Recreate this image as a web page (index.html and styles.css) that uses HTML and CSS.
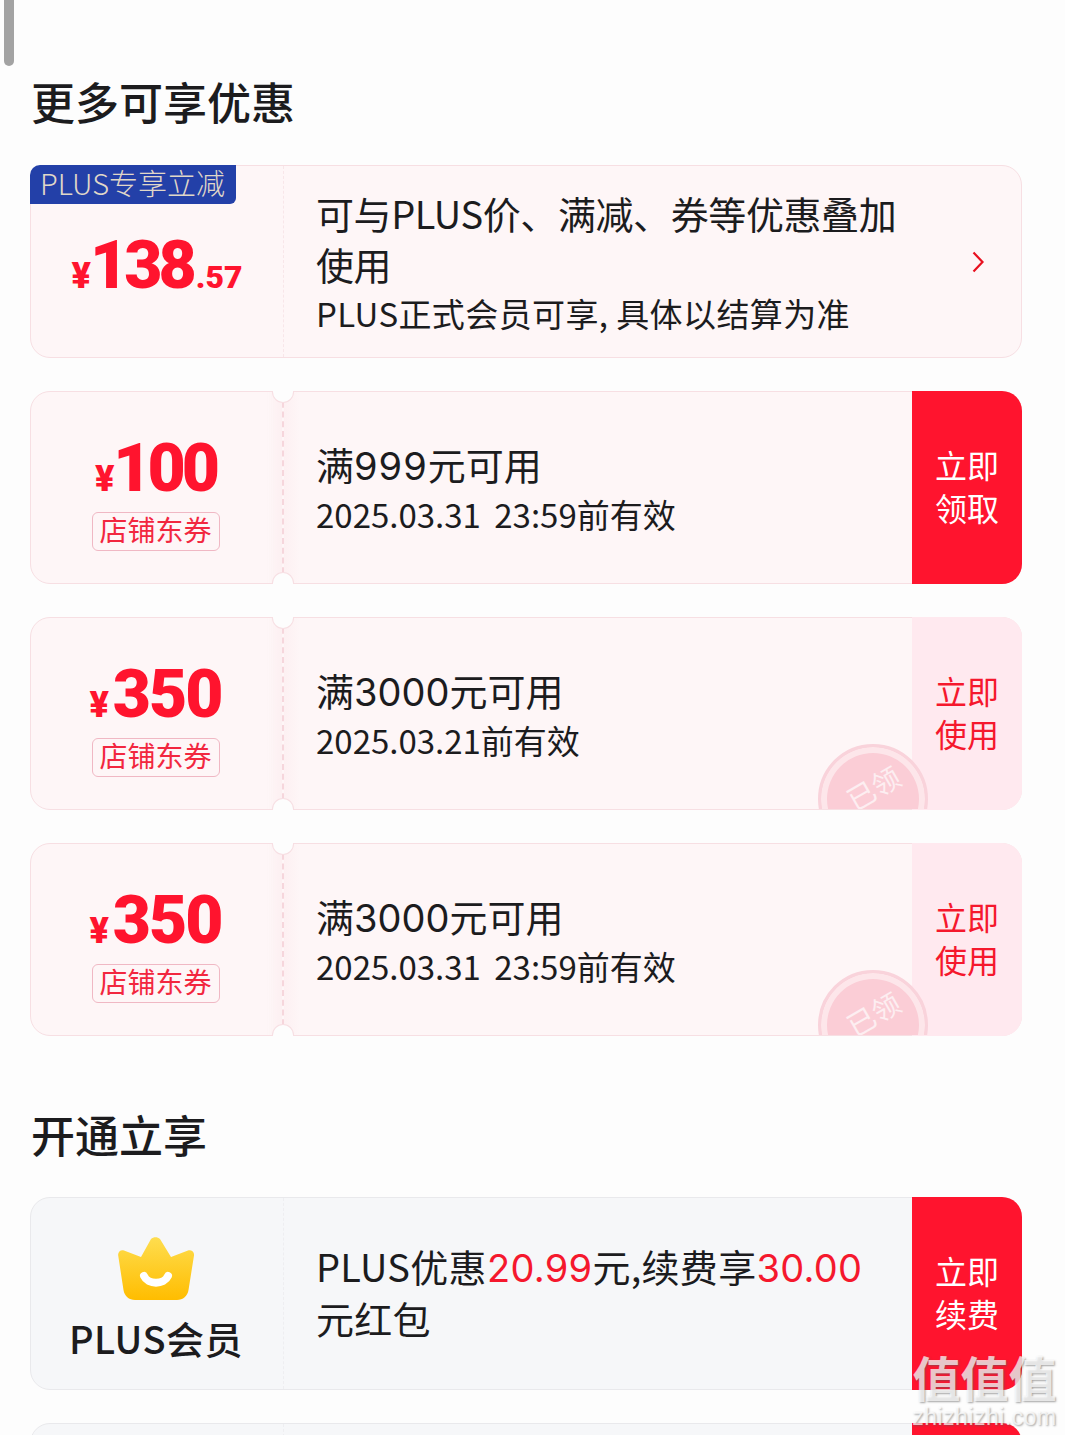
FILE: index.html
```html
<!DOCTYPE html>
<html lang="zh-CN">
<head>
  <meta charset="UTF-8" />
  <meta name="viewport" content="width=device-width, initial-scale=1.0"/>
  <title>更多可享优惠</title>
  <link rel="stylesheet" href="styles.css">
</head>
<body>
<div class="scroll-thumb"></div>

<main class="page">
  <h2>更多可享优惠</h2>

  <div class="card plus-card">
    <div class="plus-tag">PLUS专享立减</div>
    <div class="left">
      <div class="price"><span class="yen">¥</span><span class="num tight">138</span><span class="cents">.57</span></div>
    </div>
    <div class="info info-wide">
      <div class="title">可与PLUS价、满减、券等优惠叠加使用</div>
      <div class="sub">PLUS正式会员可享, 具体以结算为准</div>
    </div>
    <div class="arrow">
      <svg width="14" height="22" viewBox="0 0 14 22"><path d="M2.5 1.5 L11.5 11 L2.5 20.5" fill="none" stroke="#e8101f" stroke-width="2.2"/></svg>
    </div>
  </div>

  <div class="card coupon">
    <i class="notch notch-top"></i><i class="notch notch-bottom"></i>
    <div class="left">
      <div class="price"><span class="yen">¥</span><span class="num tight">100</span></div>
      <div class="shop-tag">店铺东券</div>
    </div>
    <div class="info">
      <div class="title">满<span class="digits wide">999</span>元可用</div>
      <div class="sub">2025.03.31 23:59前有效</div>
    </div>
    <div class="action action-red">立即<br>领取</div>
  </div>

  <div class="card coupon">
    <i class="notch notch-top"></i><i class="notch notch-bottom"></i>
    <div class="left">
      <div class="price"><span class="yen">¥</span><span class="num">350</span></div>
      <div class="shop-tag">店铺东券</div>
    </div>
    <div class="info">
      <div class="title">满<span class="digits">3000</span>元可用</div>
      <div class="sub">2025.03.21前有效</div>
    </div>
    <div class="action action-pale">立即<br>使用</div>
    <div class="stamp-clip"><div class="stamp"><span>已领</span></div></div>
  </div>

  <div class="card coupon">
    <i class="notch notch-top"></i><i class="notch notch-bottom"></i>
    <div class="left">
      <div class="price"><span class="yen">¥</span><span class="num">350</span></div>
      <div class="shop-tag">店铺东券</div>
    </div>
    <div class="info">
      <div class="title">满<span class="digits">3000</span>元可用</div>
      <div class="sub">2025.03.31 23:59前有效</div>
    </div>
    <div class="action action-pale">立即<br>使用</div>
    <div class="stamp-clip"><div class="stamp"><span>已领</span></div></div>
  </div>

  <h2 class="second">开通立享</h2>

  <div class="card grey">
    <div class="left">
      <svg class="crown" width="76" height="64" viewBox="0 0 76 64">
        <defs>
          <linearGradient id="gold" x1="0" y1="0" x2="0" y2="1">
            <stop offset="0" stop-color="#fedd4f"/>
            <stop offset="1" stop-color="#ffbd00"/>
          </linearGradient>
        </defs>
        <path d="M33 3 C35.5 0.500 39.500 0.500 42 3 L53 21 L70 14.500 C73.500 13.500 76.500 16 76 19.500 L70.500 54 C69.600 60 65 64 59 64 L17 64 C11 64 6.400 60 5.500 54 L0.200 19.500 C-0.300 16 2.500 13.500 6 14.500 L23 21 Z" fill="url(#gold)"/>
        <path d="M26 40 C30 49 46 49 50 40" fill="none" stroke="#fff" stroke-width="8" stroke-linecap="round"/>
      </svg>
      <div class="plus-name">PLUS会员</div>
    </div>
    <div class="info">
      <div class="title">PLUS优惠<em class="digits">20.99</em>元,续费享<em class="digits">30.00</em>元红包</div>
    </div>
    <div class="action action-red">立即<br>续费</div>
  </div>

  <div class="card grey">
    <div class="left"></div>
    <div class="info"></div>
    <div class="action action-red"></div>
  </div>
</main>

<div class="watermark">
  <div class="wm-big">值值值</div>
  <div class="wm-small">zhizhizhi.com</div>
</div>
</body>
</html>
```

FILE: styles.css
```css
html, body {
  margin: 0;
  height: 100%;
  overflow: hidden;
}

body {
  position: relative;
  background-color: #fdfdfd;
  color: #1c1c1e;
  font-family: "Noto Sans CJK SC", "Noto Sans", sans-serif;
}

.scroll-thumb {
  position: absolute;
  left: 4px;
  top: 0;
  width: 10px;
  height: 66px;
  background-color: #a3a3a3;
  border-radius: 0 0 5px 5px;
}

.page {
  padding: 71px 43px 0 30px;
}

h2 {
  margin: 0 0 34px 1px;
  font-size: 44px;
  line-height: 60px;
  font-weight: 500;
}

h2.second {
  margin-top: 68px;
  margin-bottom: 33px;
}

.card {
  position: relative;
  display: flex;
  box-sizing: border-box;
  height: 193px;
  margin-bottom: 33px;
  background-color: #fef6f7;
  border: 1px solid #f7dfe3;
  border-radius: 20px;
}

.card.grey {
  background-color: #f6f7f9;
  border-color: #e9e9ec;
}

.left {
  flex: none;
  display: flex;
  flex-direction: column;
  align-items: center;
  justify-content: center;
  box-sizing: border-box;
  width: 253px;
  border-right: 1px dashed #f8e6e9;
}

.grey .left {
  border-right-color: #eeeef1;
  justify-content: flex-start;
  padding: 38px 2px 0 0;
}

.plus-card .left {
  padding-top: 20px;
}

.coupon .left {
  justify-content: flex-start;
  padding: 44px 2px 0 0;
  border-right: 2px dashed #f6d6dc;
  background: linear-gradient(to right, transparent 236px, #fdf0f2);
}

.coupon .info {
  background: linear-gradient(to right, #fdf0f2, transparent 16px);
}

.info {
  flex: 1;
  display: flex;
  flex-direction: column;
  justify-content: center;
  padding: 2px 24px 0 32px;
  min-width: 0;
}

.info-wide {
  padding-right: 50px;
}

.title {
  font-size: 38px;
  line-height: 51px;
}

.info-wide .title {
  letter-spacing: -0.4px;
}

.coupon .title {
  margin: -1px 0 1px;
}

.grey .info {
  padding-top: 0;
  padding-bottom: 3px;
}

.grey .title {
  line-height: 52px;
  letter-spacing: 0.3px;
}

.digits {
  font-family: Inter, sans-serif;
  line-height: 1;
}

.digits.wide {
  letter-spacing: 1px;
}

.title em {
  font-style: normal;
  color: #f5182d;
}

.sub {
  font-size: 33px;
  line-height: 49px;
  letter-spacing: 0.4px;
}

.coupon .sub {
  letter-spacing: 0;
  word-spacing: 6px;
}

.price {
  display: flex;
  align-items: baseline;
  color: #ff142e;
  font-family: Roboto, sans-serif;
  font-weight: 900;
  line-height: 66px;
}

.yen {
  font-size: 36px;
  margin-right: 4px;
}

.num {
  font-size: 66px;
  letter-spacing: -2px;
}

.num.tight {
  letter-spacing: -4px;
  margin-left: -5px;
}

.cents {
  font-size: 32px;
  margin-left: 3px;
}

.shop-tag {
  box-sizing: border-box;
  width: 128px;
  height: 39px;
  border: 1px solid #f0b8c4;
  border-radius: 6px;
  color: #f2273f;
  font-size: 28px;
  line-height: 33px;
  text-align: center;
}

.plus-tag {
  position: absolute;
  left: -1px;
  top: -1px;
  width: 206px;
  height: 39px;
  box-sizing: border-box;
  padding-left: 10px;
  background-color: #2340a8;
  border-radius: 10px 0 6px 0;
  color: #e0d8c8;
  font-size: 29px;
  font-weight: 300;
  line-height: 35px;
  white-space: nowrap;
}

.arrow {
  flex: none;
  display: flex;
  align-items: center;
  width: 50px;
}

.action {
  flex: none;
  display: flex;
  align-items: center;
  justify-content: center;
  box-sizing: border-box;
  width: 110px;
  margin: -1px -1px -1px 0;
  padding-bottom: 4px;
  border-radius: 0 20px 20px 0;
  font-size: 32px;
  line-height: 43px;
  text-align: center;
}

.action-red {
  background-color: #ff142e;
  color: #fff;
}

.action-pale {
  background-color: #ffe9ef;
  color: #f5182d;
}

/* half circles cut out of the card edge */
.notch {
  position: absolute;
  left: 241px;
  box-sizing: border-box;
  width: 22px;
  height: 12px;
  background-color: #fdfdfd;
  border: 1px solid #f7dfe3;
}

.notch-top {
  top: -1px;
  border-top: 0;
  border-radius: 0 0 11px 11px;
}

.notch-bottom {
  bottom: -1px;
  border-bottom: 0;
  border-radius: 11px 11px 0 0;
}

.stamp-clip {
  position: absolute;
  inset: 0;
  overflow: hidden;
  border-radius: 20px;
  pointer-events: none;
}

.stamp {
  position: absolute;
  left: 787px;
  top: 126px;
  box-sizing: border-box;
  width: 110px;
  height: 110px;
  display: flex;
  align-items: center;
  justify-content: center;
  background-color: #fbcdd6;
  border: 3px solid #f9d3db;
  box-shadow: inset 0 0 0 6px #fde6ea;
  border-radius: 50%;
}

.stamp span {
  color: #fdeef1;
  font-size: 28px;
  transform: rotate(-30deg);
  margin-top: -24px;
  white-space: nowrap;
}

.plus-name {
  margin-top: 14px;
  font-size: 38px;
  font-weight: 500;
  line-height: 48px;
  letter-spacing: 0.5px;
}

.watermark {
  position: absolute;
  right: 8px;
  top: 1346px;
  width: 145px;
  text-align: center;
  color: rgba(255, 255, 255, 0.72);
  text-shadow: 1px 1px 2px rgba(90, 90, 90, 0.55);
}

.wm-big {
  font-size: 48px;
  line-height: 60px;
  font-weight: 700;
  white-space: nowrap;
}

.wm-small {
  font-family: "Liberation Sans", sans-serif;
  font-size: 23px;
  line-height: 22px;
  letter-spacing: 0.5px;
  white-space: nowrap;
}
```
